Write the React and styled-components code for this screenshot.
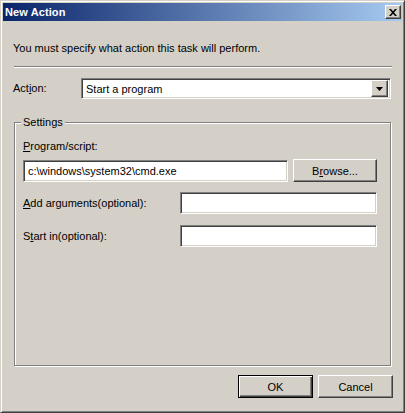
import React from "react";
import styled, { createGlobalStyle } from "styled-components";

const Global = createGlobalStyle`
  html, body {
    margin: 0;
    padding: 0;
    background: #d4d0c8;
  }
  body {
    font-family: "Liberation Sans", Arial, sans-serif;
    font-size: 11px;
    color: #000;
  }
`;

const face = "#d4d0c8";

const Window = styled.div`
  width: 405px;
  height: 413px;
  box-sizing: border-box;
  background: ${face};
  border: 1px solid;
  border-color: ${face} #404040 #404040 ${face};
  box-shadow: inset 1px 1px 0 #fff, inset -1px -1px 0 #808080;
  padding: 2px;
  display: flex;
  flex-direction: column;
`;

const TitleBar = styled.div`
  height: 18px;
  display: flex;
  align-items: center;
  justify-content: space-between;
  padding: 0 1px 0 2px;
  background: linear-gradient(to right, #0a246a, #a6caf0);
`;

const Title = styled.span`
  color: #fff;
  font-weight: bold;
  font-size: 11px;
  letter-spacing: 0.1px;
`;

const raised = `
  border: 1px solid;
  border-color: #fff #404040 #404040 #fff;
  box-shadow: inset -1px -1px 0 #808080;
`;

const sunken = `
  border: 1px solid;
  border-color: #808080 #fff #fff #808080;
  box-shadow: inset 1px 1px 0 #404040, inset -1px -1px 0 ${face};
`;

const CloseButton = styled.div`
  width: 16px;
  height: 14px;
  box-sizing: border-box;
  background: ${face};
  ${raised}
  display: flex;
  align-items: center;
  justify-content: center;
`;

const Content = styled.div`
  flex: 1;
  display: flex;
  flex-direction: column;
  padding: 0 10px 0 10px;
`;

const Intro = styled.div`
  margin-top: 21px;
  line-height: 13px;
`;

const Separator = styled.div`
  margin: 11px 0 0 1px;
  height: 1px;
  background: #808080;
  border-bottom: 1px solid #fff;
`;

const ActionRow = styled.div`
  margin-top: 10px;
  display: flex;
  align-items: center;
`;

const Label = styled.span`
  width: ${(p) => p.$w || "auto"};
  flex: none;
  line-height: 13px;
`;

const Combo = styled.div`
  flex: 1;
  height: 21px;
  box-sizing: border-box;
  background: #fff;
  ${sunken}
  display: flex;
  align-items: center;
  justify-content: space-between;
  padding: 2px 2px 2px 4px;
  margin-right: 1px;
`;

const DropButton = styled.div`
  width: 17px;
  height: 17px;
  box-sizing: border-box;
  background: ${face};
  ${raised}
  display: flex;
  align-items: center;
  justify-content: center;
`;

const GroupBox = styled.div`
  position: relative;
  margin: 23px 1px 0 1px;
  height: 244px;
  box-sizing: border-box;
  border: 1px solid #808080;
  box-shadow: inset 1px 1px 0 #fff, 1px 1px 0 #fff;
  padding: 17px 13px 0 8px;
  display: flex;
  flex-direction: column;
`;

const Legend = styled.span`
  position: absolute;
  top: -7px;
  left: 6px;
  padding: 0 2px;
  background: ${face};
  line-height: 13px;
`;

const Field = styled.div`
  display: flex;
  align-items: center;
  margin-top: ${(p) => p.$mt || 0}px;
  gap: 5px;
`;

const TextBox = styled.div`
  flex: 1;
  height: 22px;
  box-sizing: border-box;
  background: #fff;
  ${sunken}
  display: flex;
  align-items: center;
  padding-left: 4px;
`;

const Button = styled.div`
  width: ${(p) => p.$w || 75}px;
  height: 23px;
  box-sizing: border-box;
  background: ${face};
  display: flex;
  align-items: center;
  justify-content: center;
  ${(p) =>
    p.$default
      ? `border: 1px solid #000;
         box-shadow: inset 1px 1px 0 #fff, inset -1px -1px 0 #404040, inset -2px -2px 0 #808080;`
      : raised}
`;

const Footer = styled.div`
  margin-top: 9px;
  display: flex;
  justify-content: flex-end;
  gap: 5px;
  margin-right: -1px;
`;

const Close = () => (
  <svg width="8" height="7" viewBox="0 0 8 7">
    <path d="M0 0h2l2 2.3L6 0h2L5 3.5 8 7H6L4 4.7 2 7H0l3-3.5z" fill="#000" />
  </svg>
);

const Arrow = () => (
  <svg width="7" height="4" viewBox="0 0 7 4">
    <path d="M0 0h7L3.5 4z" fill="#000" />
  </svg>
);

export default function App() {
  return (
    <>
      <Global />
      <Window>
        <TitleBar>
          <Title>New Action</Title>
          <CloseButton>
            <Close />
          </CloseButton>
        </TitleBar>
        <Content>
          <Intro>You must specify what action this task will perform.</Intro>
          <Separator />
          <ActionRow>
            <Label $w="68px">
              Act<u>i</u>on:
            </Label>
            <Combo>
              <span>Start a program</span>
              <DropButton>
                <Arrow />
              </DropButton>
            </Combo>
          </ActionRow>
          <GroupBox>
            <Legend>Settings</Legend>
            <Label>
              <u>P</u>rogram/script:
            </Label>
            <Field $mt={6}>
              <TextBox>c:\windows\system32\cmd.exe</TextBox>
              <Button $w={84}>
                B<u>r</u>owse...
              </Button>
            </Field>
            <Field $mt={10}>
              <Label $w="152px">
                <u>A</u>dd arguments(optional):
              </Label>
              <TextBox />
            </Field>
            <Field $mt={11}>
              <Label $w="152px">
                S<u>t</u>art in(optional):
              </Label>
              <TextBox />
            </Field>
          </GroupBox>
          <Footer>
            <Button $default>OK</Button>
            <Button>Cancel</Button>
          </Footer>
        </Content>
      </Window>
    </>
  );
}
